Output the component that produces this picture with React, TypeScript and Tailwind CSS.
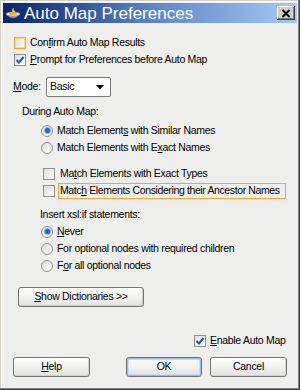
import React from "react";

const font = { fontFamily: '"Liberation Sans", Arial, sans-serif' };

function U({ children }: { children: React.ReactNode }) {
    return <span className="underline underline-offset-[1px]">{children}</span>;
}

function CheckBox({ checked = false, hot = false }: { checked?: boolean; hot?: boolean }) {
    return (
        <span
            className={`relative flex h-[12px] w-[12px] shrink-0 items-center justify-center border bg-gradient-to-br from-[#dcdcd7] to-white ${
                hot ? "border-[#f1a73c] shadow-[inset_0_0_0_1px_#fbd58a]" : "border-[#8f8f8f]"
            }`}
        >
            {checked && (
                <svg width="10" height="10" viewBox="0 0 10 10">
                    <path d="M1.5 5 L4 7.5 L8.5 2" fill="none" stroke="#2456c8" strokeWidth="2" />
                </svg>
            )}
        </span>
    );
}

function Radio({ checked = false }: { checked?: boolean }) {
    return (
        <span className="flex h-[12px] w-[12px] shrink-0 items-center justify-center rounded-full border border-[#8f8f8f] bg-gradient-to-br from-[#dcdcd7] to-white">
            {checked && <span className="h-[5px] w-[5px] rounded-full bg-[#2f5fd0] shadow-[0_0_0_1px_#8fb0ee]" />}
        </span>
    );
}

function XpButton({ children, def = false, className = "" }: { children: React.ReactNode; def?: boolean; className?: string }) {
    return (
        <div
            className={`flex h-[20px] items-center justify-center rounded-[3px] border border-[#737373] bg-gradient-to-b from-white to-[#e2e2e0] text-black ${
                def ? "shadow-[inset_0_0_0_1px_#9ab8ec,inset_0_0_0_2px_#c9d9f5]" : "shadow-[inset_-1px_-1px_0_#d0d0cc]"
            } ${className}`}
        >
            {children}
        </div>
    );
}

export default function App() {
    return (
        <div
            style={font}
            className="flex h-[390px] w-[300px] flex-col bg-[#eeeeec] p-[3px] text-[10.5px] tracking-[-0.3px] text-black shadow-[inset_-1px_-1px_0_#404040,inset_-2px_-2px_0_#808080,inset_1px_1px_0_#d4d0c8,inset_2px_2px_0_#ffffff]"
        >
            {/* Title bar */}
            <div className="flex h-[20px] shrink-0 items-center bg-gradient-to-r from-[#0a246a] via-[#5c84c8] to-[#a6caf0]">
                <svg width="16" height="16" viewBox="0 0 16 16" className="ml-[2px] shrink-0">
                    <path d="M1 9 Q8 17 15 9 Z" fill="#b8b8b8" stroke="#6a6a6a" strokeWidth="0.8" />
                    <ellipse cx="8" cy="9" rx="7" ry="2" fill="#e9e9e9" stroke="#7a7a7a" strokeWidth="0.6" />
                    <ellipse cx="8" cy="8.8" rx="4" ry="1.2" fill="#f2b630" />
                    <path d="M8 8 Q6 5 8.5 3 Q8 5 10 6.5 Q9.5 8 8 8 Z" fill="#f7d050" stroke="#c88a10" strokeWidth="0.5" />
                </svg>
                <span className="ml-[3px] text-[17px] leading-none tracking-normal text-white">Auto Map Preferences</span>
                <div className="ml-auto mr-[2px] flex h-[14px] w-[18px] items-center justify-center bg-[#d4d0c8] shadow-[inset_-1px_-1px_0_#404040,inset_1px_1px_0_#ffffff,inset_-2px_-2px_0_#808080]">
                    <svg width="10" height="9" viewBox="0 0 10 9">
                        <path d="M1.5 1 L8.5 8 M8.5 1 L1.5 8" stroke="#000" strokeWidth="2" />
                    </svg>
                </div>
            </div>

            {/* Body */}
            <div className="flex flex-1 flex-col">
                <label className="ml-[11px] mt-[11px] flex h-[17px] items-center gap-[4px]">
                    <CheckBox hot />
                    <span>Con<U>f</U>irm Auto Map Results</span>
                </label>
                <label className="ml-[11px] flex h-[17px] items-center gap-[4px]">
                    <CheckBox checked />
                    <span><U>P</U>rompt for Preferences before Auto Map</span>
                </label>

                <div className="ml-[10px] mt-[9px] flex h-[20px] items-center">
                    <span className="w-[33px]"><U>M</U>ode:</span>
                    <div className="flex h-[20px] w-[65px] items-center rounded-[2px] border border-[#7b7b7b] bg-white pl-[3px] pr-[6px]">
                        <span>Basic</span>
                        <svg width="8" height="5" viewBox="0 0 8 5" className="ml-auto">
                            <path d="M0 0 H8 L4 4.5 Z" fill="#000" />
                        </svg>
                    </div>
                </div>

                <div className="ml-[19px] mt-[6px] flex h-[17px] items-center">During Auto Map:</div>

                <div className="ml-[38px] mt-[2px] flex h-[17px] items-center gap-[4px]">
                    <Radio checked />
                    <span>Match Element<U>s</U> with Similar Names</span>
                </div>
                <div className="ml-[38px] flex h-[17px] items-center gap-[4px]">
                    <Radio />
                    <span>Match Elements with E<U>x</U>act Names</span>
                </div>

                <div className="ml-[40px] mt-[9px] flex h-[17px] items-center gap-[4px]">
                    <CheckBox />
                    <span className="pl-[1px]">Ma<U>t</U>ch Elements with Exact Types</span>
                </div>
                <div className="ml-[40px] flex h-[17px] items-center gap-[3px]">
                    <CheckBox />
                    <span className="flex h-[16px] w-[228px] items-center whitespace-nowrap border border-[#f0a43a] pl-[1px] tracking-[-0.38px]">
                        <span>Matc<U>h</U> Elements Considering their Ancestor Names</span>
                    </span>
                </div>

                <div className="ml-[37px] mt-[7px] flex h-[17px] items-center">Insert xsl:if statements:</div>
                <div className="ml-[38px] flex h-[17px] items-center gap-[4px]">
                    <Radio checked />
                    <span><U>N</U>ever</span>
                </div>
                <div className="ml-[38px] flex h-[17px] items-center gap-[4px]">
                    <Radio />
                    <span>For optional nodes with required children</span>
                </div>
                <div className="ml-[38px] flex h-[17px] items-center gap-[4px]">
                    <Radio />
                    <span>F<U>o</U>r all optional nodes</span>
                </div>

                <XpButton className="ml-[15px] mt-[13px] w-[126px]">
                    <span><U>S</U>how Dictionaries &gt;&gt;</span>
                </XpButton>

                <label className="ml-[191px] mt-[25px] flex h-[17px] items-center gap-[4px]">
                    <CheckBox checked />
                    <span><U>E</U>nable Auto Map</span>
                </label>

                <div className="mt-[8px] flex items-center pl-[10px]">
                    <XpButton className="w-[77px]">
                        <span><U>H</U>elp</span>
                    </XpButton>
                    <XpButton def className="ml-[36px] w-[76px]">
                        <span>OK</span>
                    </XpButton>
                    <XpButton className="ml-[8px] w-[77px]">
                        <span>Cancel</span>
                    </XpButton>
                </div>
            </div>
        </div>
    );
}
